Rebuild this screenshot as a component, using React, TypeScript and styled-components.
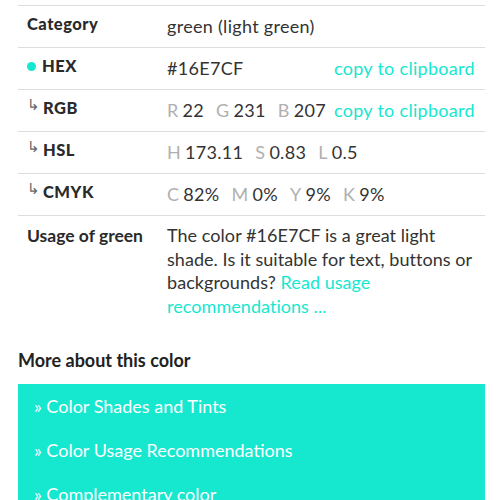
import React from "react";
import styled, { createGlobalStyle } from "styled-components";

const TEAL = "#16E7CF";

const GlobalStyle = createGlobalStyle`
  body {
    margin: 0;
    background: #fff;
    font-family: "Lato", "Noto Sans", sans-serif;
    color: #333;
  }
`;

const Page = styled.div`
  padding: 5px 15px 0 18px;
`;

const Table = styled.div`
  border-top: 1px solid #ddd;
`;

const Row = styled.div<{ $last?: boolean }>`
  display: grid;
  grid-template-columns: 140px 1fr;
  padding: 8px 10px 9px 9px;
  border-bottom: ${(p) => (p.$last ? "none" : "1px solid #ddd")};
`;

const Label = styled.div<{ $soft?: boolean }>`
  display: flex;
  align-items: center;
  gap: 6px;
  font-size: ${(p) => (p.$soft ? "17.5px" : "16.5px")};
  font-weight: ${(p) => (p.$soft ? 700 : 900)};
  letter-spacing: ${(p) => (p.$soft ? "0" : "0.5px")};
  color: #2a2a2a;
  line-height: 20px;
  align-self: start;
  margin-top: ${(p) => (p.$soft ? "2px" : "0")};
`;

const Dot = styled.span`
  width: 9px;
  height: 9px;
  border-radius: 50%;
  background: ${TEAL};
`;

const Arrow = styled.span`
  font-size: 15px;
  font-weight: 400;
  color: #666;
  margin-top: -8px;
  margin-right: -3px;
  letter-spacing: 0;
`;

const Value = styled.div`
  display: flex;
  align-items: center;
  font-size: 18px;
  letter-spacing: 0.3px;
  line-height: 24px;
  color: #333;
`;

const Parts = styled.span`
  display: flex;
  gap: 12px;
`;

const Part = styled.span`
  white-space: nowrap;
`;

const Key = styled.span`
  color: #b0b0b0;
  margin-right: 4px;
`;

const Copy = styled.a`
  margin-left: auto;
  color: ${TEAL};
  text-decoration: none;
`;

const Text = styled.p`
  margin: 0;
  font-size: 18px;
  letter-spacing: 0.05px;
  line-height: 23.5px;
  color: #333;
`;

const Link = styled.a`
  color: ${TEAL};
  text-decoration: none;
`;

const Heading = styled.h3`
  margin: 22px 0 13px;
  font-size: 18px;
  font-weight: 700;
  color: #222;
`;

const MoreList = styled.ul`
  list-style: none;
  margin: 0;
  padding: 0;
  background: ${TEAL};
  width: 467px;
`;

const MoreItem = styled.li`
  height: 44px;
  display: flex;
  align-items: center;
  padding-left: 16px;
  font-size: 18px;
  color: #fff;
`;

type Pair = [string, string];

const Values: React.FC<{ items: Pair[] }> = ({ items }) => (
  <Parts>
    {items.map(([k, v]) => (
      <Part key={k}>
        <Key>{k}</Key>
        {v}
      </Part>
    ))}
  </Parts>
);

const App: React.FC = () => {
  return (
    <>
      <GlobalStyle />
      <Page>
        <Table>
          <Row>
            <Label>Category</Label>
            <Value>green (light green)</Value>
          </Row>
          <Row>
            <Label>
              <Dot />
              HEX
            </Label>
            <Value>
              #16E7CF
              <Copy href="#">copy to clipboard</Copy>
            </Value>
          </Row>
          <Row>
            <Label>
              <Arrow>↳</Arrow>RGB
            </Label>
            <Value>
              <Values items={[["R", "22"], ["G", "231"], ["B", "207"]]} />
              <Copy href="#">copy to clipboard</Copy>
            </Value>
          </Row>
          <Row>
            <Label>
              <Arrow>↳</Arrow>HSL
            </Label>
            <Value>
              <Values items={[["H", "173.11"], ["S", "0.83"], ["L", "0.5"]]} />
            </Value>
          </Row>
          <Row>
            <Label>
              <Arrow>↳</Arrow>CMYK
            </Label>
            <Value>
              <Values items={[["C", "82%"], ["M", "0%"], ["Y", "9%"], ["K", "9%"]]} />
            </Value>
          </Row>
          <Row $last>
            <Label $soft>Usage of green</Label>
            <Text>
              The color #16E7CF is a great light shade. Is it suitable for text, buttons or backgrounds?{" "}
              <Link href="#">Read usage recommendations ...</Link>
            </Text>
          </Row>
        </Table>
        <Heading>More about this color</Heading>
        <MoreList>
          <MoreItem>» Color Shades and Tints</MoreItem>
          <MoreItem>» Color Usage Recommendations</MoreItem>
          <MoreItem>» Complementary color</MoreItem>
        </MoreList>
      </Page>
    </>
  );
};

export default App;
